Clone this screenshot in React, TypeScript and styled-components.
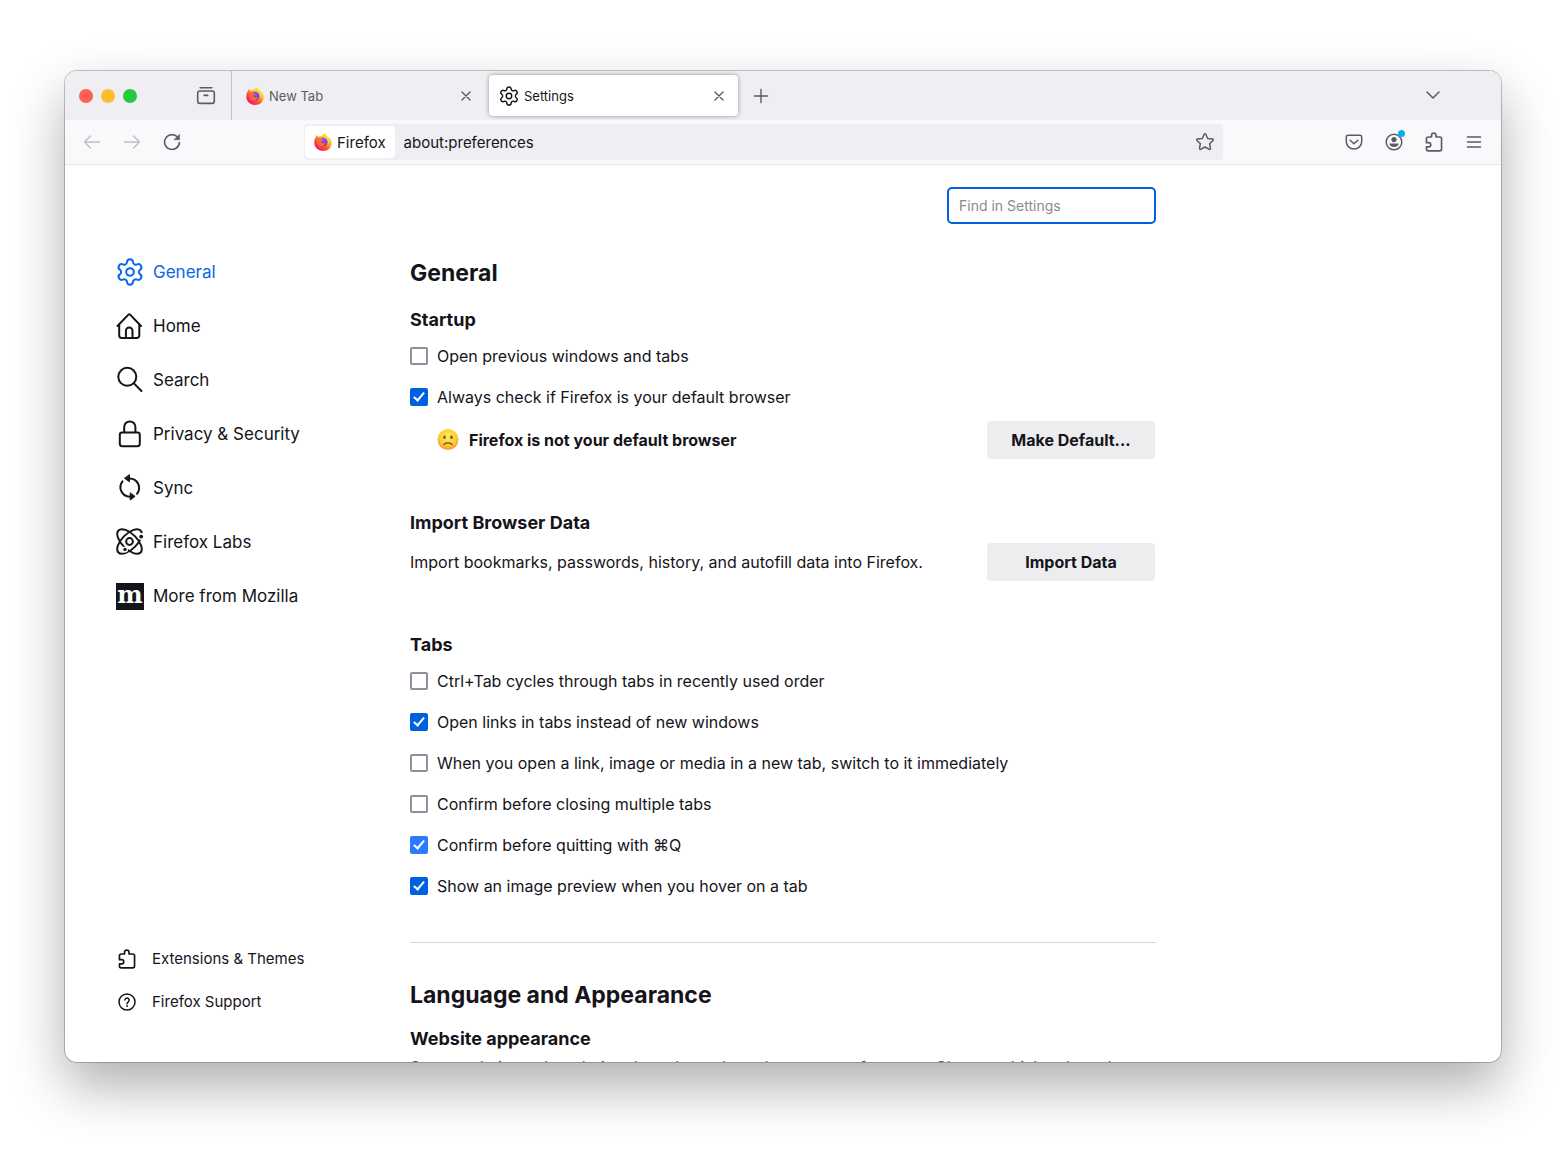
import React, { useState } from 'react';
import styled, { createGlobalStyle, css } from 'styled-components';

const GlobalStyle = createGlobalStyle`
  *, *::before, *::after { box-sizing: border-box; }
  body {
    margin: 0;
    background: #fff;
    color: #15141a;
    font-family: Inter, "Liberation Sans", "DejaVu Sans", sans-serif;
  }
  button, input { font: inherit; color: inherit; }
  h1, h2, h3, p, ul { margin: 0; padding: 0; }
  svg { display: block; flex: none; }
`;

/* ---------- icons ---------- */

type IconProps = { size?: number; stroke?: number };

const Line = ({
  size = 20,
  stroke = 1.5,
  box = 24,
  inset = 0,
  children,
}: IconProps & { box?: number; inset?: number; children: React.ReactNode }) => (
  <svg
    width={size}
    height={size}
    viewBox={`${inset} ${inset} ${box - 2 * inset} ${box - 2 * inset}`}
    fill="none"
    stroke="currentColor"
    strokeWidth={stroke}
    strokeLinecap="round"
    strokeLinejoin="round"
    aria-hidden="true"
  >
    {children}
  </svg>
);

const GearIcon = ({ size, stroke = 1.6 }: IconProps) => (
  <Line size={size} stroke={stroke} inset={1}>
    <path d="M9.671 4.136a2.34 2.34 0 0 1 4.659 0 2.34 2.34 0 0 0 3.319 1.915 2.34 2.34 0 0 1 2.33 4.033 2.34 2.34 0 0 0 0 3.831 2.34 2.34 0 0 1-2.33 4.033 2.34 2.34 0 0 0-3.319 1.915 2.34 2.34 0 0 1-4.659 0 2.34 2.34 0 0 0-3.32-1.915 2.34 2.34 0 0 1-2.33-4.033 2.34 2.34 0 0 0 0-3.831A2.34 2.34 0 0 1 6.35 6.051a2.34 2.34 0 0 0 3.319-1.915" />
    <circle cx="12" cy="12" r="3" />
  </Line>
);

const HomeIcon = () => (
  <Line size={28} box={28} stroke={2}>
    <path d="M1.500 14 12.400 2.600a1.200 1.200 0 0 1 1.700 0L25 14" />
    <path d="M3.200 12.700v10.900a2.400 2.400 0 0 0 2.400 2.400h15.300a2.400 2.400 0 0 0 2.400-2.400V12.700" />
    <path d="M9.900 25.600v-6.800a3.300 3.300 0 0 1 6.600 0v6.800" />
  </Line>
);

const SearchIcon = () => (
  <Line size={28} box={28} stroke={2}>
    <circle cx="11.300" cy="10.800" r="9" />
    <path d="m17.900 17.400 7.600 7.600" />
  </Line>
);

const LockIcon = () => (
  <Line size={28} box={28} stroke={2}>
    <rect x="3.800" y="12.400" width="20" height="13.800" rx="2.400" />
    <path d="M8.200 12.200V7a5.600 5.600 0 0 1 11.200 0v5.200" />
  </Line>
);

const SyncIcon = () => (
  <Line size={28} box={28} stroke={2}>
    <path d="M6.500 7.300a9.500 9.500 0 0 0 7.300 15.400" />
    <path d="M13.600 4.400A9.500 9.500 0 0 1 21 19.800" />
    <path d="M13.400 1v6.800L8.800 4.400z" fill="currentColor" strokeWidth="1" />
    <path d="M14.200 19.200V26l4.600-3.400z" fill="currentColor" strokeWidth="1" />
  </Line>
);

const LabsIcon = () => (
  <Line size={28} box={28} stroke={2}>
    <circle cx="13.500" cy="13.500" r="3.400" />
    <ellipse cx="13.500" cy="13.500" rx="15.600" ry="7.600" transform="rotate(45 13.500 13.500)" />
    <ellipse cx="13.500" cy="13.500" rx="15.600" ry="7.600" transform="rotate(-45 13.500 13.500)" />
    <circle cx="25.400" cy="8.400" r="3.400" fill="#fff" stroke="none" />
    <circle cx="9" cy="21.400" r="3" fill="#fff" stroke="none" />
    <circle cx="25.200" cy="8.600" r="1.900" fill="currentColor" stroke="none" />
    <circle cx="9" cy="21.400" r="1.700" fill="currentColor" stroke="none" />
  </Line>
);

const PuzzleIcon = () => (
  <Line size={20} box={20} stroke={1.5} inset={1}>
    <path d="M3.200 7.200c0-1 .6-1.700 1.600-1.700h3V4a2 2 0 0 1 4 0v1.500h3.400c1 0 1.600.6 1.600 1.600v9.300c0 1-.6 1.600-1.600 1.600H4.800c-1 0-1.600-.6-1.600-1.600v-2h2a1.900 1.900 0 0 0 0-3.800h-2z" />
  </Line>
);

const HelpIcon = () => (
  <Line size={20} box={20} stroke={1.5}>
    <circle cx="10" cy="10" r="8" />
    <path d="M7.900 8.100a2.100 2.100 0 1 1 3.400 1.700c-.8.6-1.300 1-1.300 1.900" />
    <circle cx="10" cy="14" r=".4" fill="currentColor" strokeWidth="1" />
  </Line>
);

const ArchiveIcon = () => (
  <Line size={20} box={20} stroke={1.6}>
    <path d="M4.200 1.800h11.600" />
    <rect x="1.700" y="5" width="16.600" height="12.400" rx="2.200" />
    <path d="M8.200 9.400h3.600" />
  </Line>
);

const CloseIcon = () => (
  <Line size={12} box={12} stroke={1.400}>
    <path d="m2 2 8 8M10 2l-8 8" />
  </Line>
);

const PlusIcon = () => (
  <Line size={16} box={16} stroke={1.400}>
    <path d="M8 1.500v13M1.500 8h13" />
  </Line>
);

const ChevronIcon = () => (
  <Line size={16} box={16} stroke={1.500}>
    <path d="m2 4 6 6 6-6" />
  </Line>
);

const BackIcon = () => (
  <Line size={18} box={18} stroke={1.500}>
    <path d="M16.500 9h-15M7.500 3l-6 6 6 6" />
  </Line>
);

const ForwardIcon = () => (
  <Line size={18} box={18} stroke={1.500}>
    <path d="M1.500 9h15M10.500 3l6 6-6 6" />
  </Line>
);

const ReloadIcon = () => (
  <Line size={18} box={18} stroke={1.600}>
    <path d="M14.600 4.200A7.400 7.400 0 1 0 16.400 9.600" />
    <path d="M16.500 1.500v5.200h-5.200z" fill="currentColor" strokeWidth=".6" />
  </Line>
);

const StarIcon = () => (
  <Line size={20} box={20} stroke={1.500}>
    <path d="M9.200 2.300a.9.9 0 0 1 1.600 0l1.900 4.200 4.800.6c.8.1 1 .9.500 1.400l-3.400 3.200.9 4.700c.1.700-.6 1.200-1.200.9L10 15l-4.300 2.300c-.6.300-1.300-.2-1.200-.9l.9-4.700L2 8.500c-.5-.5-.3-1.300.5-1.400l4.800-.6z" />
  </Line>
);

const PocketIcon = () => (
  <Line size={18} box={18} stroke={1.500}>
    <path d="M3 2.200h12c1 0 1.700.7 1.700 1.700v4.500a7.700 7.700 0 0 1-15.400 0V3.900c0-1 .7-1.700 1.700-1.700z" />
    <path d="M5.200 7.200 9 10.800l3.800-3.600" />
  </Line>
);

const AccountIcon = () => (
  <Line size={18} box={18} stroke={1.500}>
    <circle cx="9" cy="9" r="7.800" />
    <circle cx="9" cy="6.600" r="2.600" fill="currentColor" stroke="none" />
    <path d="M4.400 10.600h9.200c0 2-1.900 3.400-4.600 3.400s-4.600-1.400-4.600-3.400z" fill="currentColor" stroke="none" />
  </Line>
);

const MenuIcon = () => (
  <Line size={16} box={16} stroke={1.500}>
    <path d="M1.500 3h13M1.500 8h13M1.500 13h13" />
  </Line>
);

const FirefoxLogo = ({ id }: { id: string }) => (
  <svg width="18" height="18" viewBox="0 0 36 36" aria-hidden="true">
    <defs>
      <linearGradient id={`${id}-body`} x1="0.850" y1="0.100" x2="0.200" y2="0.950">
        <stop offset="0" stopColor="#fff14a" />
        <stop offset="0.350" stopColor="#ffb82e" />
        <stop offset="0.600" stopColor="#ff5a2c" />
        <stop offset="1" stopColor="#f0107c" />
      </linearGradient>
      <radialGradient id={`${id}-globe`} cx="0.500" cy="0.300" r="0.700">
        <stop offset="0" stopColor="#a34bff" />
        <stop offset="1" stopColor="#5a38c8" />
      </radialGradient>
    </defs>
    <path
      d="M22 0c1 4 4 5.500 6.500 8.500C32 10 35.500 14 35.500 20 35.500 29 28 36 18 36S.5 28.500.5 19.500C.5 14.500 2 10.500 4 7.500L5 4l4 4c2-1.500 4-2 6.500-2C17.500 3 19.500 1 22 0z"
      fill={`url(#${id}-body)`}
    />
    <circle cx="18.500" cy="18" r="8.500" fill={`url(#${id}-globe)`} />
    <path d="M6 13c3-3 6-3 9-1 2 0 3.500.5 3.500 1.500-1 2-3.500 1.500-4.500 4 1 3.500 5.500 4.500 10 2-1 5-6 8-11 7C8.500 26 5 20 6 13z" fill="#ff6a28" />
    <path d="M22 3c6 5 9.500 10 7 17-.5-4-2-7-5-8.500C22 9 20.500 6 22 3z" fill="#ffd83c" />
  </svg>
);

const FrownFace = () => (
  <svg width="22" height="22" viewBox="0 0 22 22" role="img" aria-label="Slightly frowning face">
    <defs>
      <radialGradient id="face" cx="0.500" cy="0.350" r="0.650">
        <stop offset="0" stopColor="#ffea5c" />
        <stop offset="0.650" stopColor="#fccb37" />
        <stop offset="1" stopColor="#f0992a" />
      </radialGradient>
    </defs>
    <circle cx="11" cy="10.500" r="10.500" fill="url(#face)" />
    <ellipse cx="7.500" cy="8.300" rx="1.100" ry="1.700" fill="#6b3d10" />
    <ellipse cx="14.500" cy="8.300" rx="1.100" ry="1.700" fill="#6b3d10" />
    <path d="M7 15.500c1.800-2.200 6.200-2.200 8 0" fill="none" stroke="#6b3d10" strokeWidth="1.200" strokeLinecap="round" />
  </svg>
);

/* ---------- window chrome ---------- */

const Desktop = styled.div`
  display: flex;
  height: 100vh;
  padding: 71px 59px 92px 65px;
`;

const Window = styled.div`
  flex: 1;
  min-width: 0;
  display: flex;
  flex-direction: column;
  overflow: hidden;
  background: #fff;
  border-radius: 12px;
  box-shadow: 0 0 0 1px rgba(0, 0, 0, 0.22), 0 24px 54px rgba(0, 0, 0, 0.32);
`;

const TabStrip = styled.header`
  display: flex;
  align-items: center;
  height: 49px;
  flex: none;
  background: #efeef3;
`;

const WindowControls = styled.div`
  display: flex;
  gap: 8px;
  padding: 0 58px 0 14px;
`;

const ControlDot = styled.button<{ $color: string }>`
  width: 14px;
  height: 14px;
  padding: 0;
  border: 0;
  border-radius: 50%;
  background: ${(p) => p.$color};
`;

const IconButton = styled.button<{ $size?: number; $faded?: boolean }>`
  position: relative;
  display: flex;
  align-items: center;
  justify-content: center;
  flex: none;
  width: ${(p) => p.$size ?? 40}px;
  height: ${(p) => p.$size ?? 40}px;
  padding: 0;
  border: 0;
  background: none;
  color: ${(p) => (p.$faded ? '#bfbfc4' : '#5b5b66')};
`;

const StripDivider = styled.div`
  align-self: stretch;
  width: 1px;
  margin-left: 14px;
  background: #c2c2c7;
`;

const Tab = styled.div<{ $active?: boolean }>`
  display: flex;
  align-items: center;
  width: 249px;
  height: 41px;
  margin-left: 4px;
  padding: 0 9px 0 10px;
  border-radius: 4px;
  font-size: 13px;
  color: #5b5b66;
  ${(p) =>
    p.$active &&
    css`
      color: #15141a;
      background: #fff;
      box-shadow: 0 0 4px rgba(0, 0, 0, 0.4);
    `}
`;

const TabTitle = styled.button`
  flex: 1;
  min-width: 0;
  display: flex;
  align-items: center;
  gap: 5px;
  padding: 0;
  border: 0;
  background: none;
  text-align: left;
`;

const TabList = styled.div`
  flex: 1;
  min-width: 0;
  display: flex;
  align-items: center;
`;

const StripEnd = styled.div`
  padding-right: 48px;
`;

const NavBar = styled.div`
  display: flex;
  align-items: center;
  flex: none;
  height: 45px;
  padding: 0 7px;
  background: #f9f9fb;
  border-bottom: 1px solid #e6e6ea;
`;

const UrlBar = styled.div`
  flex: 1;
  min-width: 0;
  display: flex;
  align-items: center;
  height: 36px;
  margin: 0 111px 0 112px;
  padding: 2px 0 2px 1px;
  border-radius: 4px;
  background: #efeef3;
  font-size: 15px;
`;

const Identity = styled.button`
  display: flex;
  align-items: center;
  gap: 5px;
  height: 32px;
  padding: 0 9px;
  border: 0;
  border-radius: 4px;
  background: #fff;
`;

const UrlInput = styled.input`
  flex: 1;
  min-width: 0;
  padding: 0 9px;
  border: 0;
  outline: 0;
  background: none;
`;

const Badge = styled.span`
  position: absolute;
  top: 8px;
  right: 9px;
  width: 7px;
  height: 7px;
  border-radius: 50%;
  background: #00b3f4;
`;

/* ---------- preferences page ---------- */

const Page = styled.div`
  flex: 1;
  min-height: 0;
  display: flex;
  overflow: hidden;
`;

const Sidebar = styled.nav`
  width: 345px;
  flex: none;
  display: flex;
  flex-direction: column;
  justify-content: space-between;
  padding: 80px 20px 39px 51px;
`;

const LinkList = styled.ul`
  list-style: none;
`;

const Category = styled.a<{ $selected?: boolean }>`
  display: flex;
  align-items: center;
  gap: 9px;
  height: 54px;
  font-size: 17px;
  text-decoration: none;
  color: ${(p) => (p.$selected ? '#0a67e8' : '#15141a')};
`;

const FooterLink = styled.a`
  display: flex;
  align-items: center;
  gap: 15px;
  height: 43px;
  padding-left: 1px;
  font-size: 15px;
  text-decoration: none;
  color: #15141a;
`;

const MozillaMark = styled.span`
  display: flex;
  align-items: center;
  justify-content: center;
  width: 28px;
  height: 27px;
  padding-bottom: 3px;
  background: #15141a;
  color: #fff;
  font: bold 24px/24px "DejaVu Serif", serif;
`;

const Main = styled.main`
  flex: 1;
  min-width: 0;
  max-width: 746px;
  display: flex;
  flex-direction: column;
`;

const SearchRow = styled.div`
  display: flex;
  justify-content: flex-end;
  padding: 22px 0 32px;
`;

const SearchInput = styled.input`
  width: 209px;
  height: 37px;
  margin-bottom: 1px;
  padding: 0 10px;
  border: 2px solid #0061e0;
  border-radius: 5px;
  outline: 0;
  background: #fff;
  font-size: 14px;
  &::placeholder { color: #8a8a8f; opacity: 1; }
`;

const Title = styled.h1`
  font-size: 23px;
  line-height: 32px;
  font-weight: 700;
`;

const Group = styled.section<{ $top?: number }>`
  display: flex;
  flex-direction: column;
  padding-top: ${(p) => p.$top ?? 51}px;
`;

const GroupTitle = styled.h2`
  font-size: 18px;
  line-height: 26px;
  font-weight: 700;
`;

const Options = styled.div`
  display: flex;
  flex-direction: column;
  gap: 17px;
  padding: 11px 0 12px;
`;

const OptionLabel = styled.label`
  display: flex;
  align-items: center;
  gap: 9px;
  font-size: 16px;
  line-height: 24px;
`;

const Tick = styled.input<{ $bright?: boolean }>`
  appearance: none;
  display: flex;
  justify-content: center;
  flex: none;
  width: 18px;
  height: 18px;
  margin: 0;
  border: 2px solid #8f8f9d;
  border-radius: 2px;
  background: #fff;
  &:checked {
    border-color: ${(p) => (p.$bright ? '#2a7bff' : '#0061e0')};
    background: ${(p) => (p.$bright ? '#2a7bff' : '#0061e0')};
  }
  &:checked::after {
    content: '';
    width: 6px;
    height: 11px;
    border: solid #fff;
    border-width: 0 2px 2px 0;
    transform: rotate(40deg);
  }
`;

const ActionRow = styled.div<{ $indent?: boolean }>`
  display: flex;
  align-items: center;
  gap: 10px;
  padding-left: ${(p) => (p.$indent ? 27 : 0)}px;
  font-size: 16px;
  font-weight: ${(p) => (p.$indent ? 700 : 400)};
`;

const ActionText = styled.p`
  flex: 1;
  line-height: 24px;
`;

const ActionButton = styled.button`
  width: 168px;
  height: 38px;
  margin-right: 1px;
  border: 0;
  border-radius: 4px;
  background: #ededf0;
  font-weight: 700;
`;

const ImportBody = styled.div`
  padding-top: 7px;
`;

const Rule = styled.hr`
  width: 100%;
  margin: 32px 0 36px;
  border: 0;
  border-top: 1px solid #d7d7db;
`;

const Description = styled.p`
  padding-top: 3px;
  font-size: 16px;
  line-height: 24px;
  color: #5b5b66;
`;

type OptionProps = { text: React.ReactNode; on?: boolean; bright?: boolean };

const Option = ({ text, on = false, bright }: OptionProps) => {
  const [checked, setChecked] = useState(on);
  return (
    <OptionLabel>
      <Tick type="checkbox" checked={checked} $bright={bright} onChange={() => setChecked(!checked)} />
      <span>{text}</span>
    </OptionLabel>
  );
};

const categories = [
  { label: 'General', icon: <GearIcon size={28} /> },
  { label: 'Home', icon: <HomeIcon /> },
  { label: 'Search', icon: <SearchIcon /> },
  { label: 'Privacy & Security', icon: <LockIcon /> },
  { label: 'Sync', icon: <SyncIcon /> },
  { label: 'Firefox Labs', icon: <LabsIcon /> },
  { label: 'More from Mozilla', icon: <MozillaMark aria-hidden="true">m</MozillaMark> },
];

const tabOptions: OptionProps[] = [
  { text: 'Ctrl+Tab cycles through tabs in recently used order' },
  { text: 'Open links in tabs instead of new windows', on: true },
  { text: 'When you open a link, image or media in a new tab, switch to it immediately' },
  { text: 'Confirm before closing multiple tabs' },
  { text: 'Confirm before quitting with ⌘Q', on: true, bright: true },
  { text: 'Show an image preview when you hover on a tab', on: true },
];

export default function App() {
  return (
    <>
      <GlobalStyle />
      <Desktop>
        <Window>
          <TabStrip>
            <WindowControls>
              <ControlDot $color="#ff5f57" aria-label="Close window" />
              <ControlDot $color="#febc2e" aria-label="Minimize window" />
              <ControlDot $color="#28c840" aria-label="Zoom window" />
            </WindowControls>
            <IconButton $size={22} aria-label="View recent browsing"><ArchiveIcon /></IconButton>
            <StripDivider />
            <TabList>
              <Tab>
                <TabTitle><FirefoxLogo id="tab" />New Tab</TabTitle>
                <IconButton $size={20} aria-label="Close tab"><CloseIcon /></IconButton>
              </Tab>
              <Tab $active>
                <TabTitle><GearIcon size={20} />Settings</TabTitle>
                <IconButton $size={20} aria-label="Close tab"><CloseIcon /></IconButton>
              </Tab>
              <IconButton $size={46} aria-label="New tab"><PlusIcon /></IconButton>
            </TabList>
            <StripEnd>
              <IconButton aria-label="List all tabs"><ChevronIcon /></IconButton>
            </StripEnd>
          </TabStrip>

          <NavBar>
            <IconButton $faded aria-label="Back"><BackIcon /></IconButton>
            <IconButton $faded aria-label="Forward"><ForwardIcon /></IconButton>
            <IconButton aria-label="Reload"><ReloadIcon /></IconButton>
            <UrlBar>
              <Identity><FirefoxLogo id="identity" />Firefox</Identity>
              <UrlInput aria-label="Address" defaultValue="about:preferences" />
              <IconButton $size={36} aria-label="Bookmark this page"><StarIcon /></IconButton>
            </UrlBar>
            <IconButton aria-label="Save to Pocket"><PocketIcon /></IconButton>
            <IconButton aria-label="Account"><AccountIcon /><Badge /></IconButton>
            <IconButton aria-label="Extensions"><PuzzleIcon /></IconButton>
            <IconButton aria-label="Open application menu"><MenuIcon /></IconButton>
          </NavBar>

          <Page>
            <Sidebar aria-label="Settings categories">
              <LinkList>
                {categories.map((c, i) => (
                  <li key={c.label}>
                    <Category href="#" $selected={i === 0}>{c.icon}{c.label}</Category>
                  </li>
                ))}
              </LinkList>
              <LinkList>
                <li><FooterLink href="#"><PuzzleIcon />Extensions &amp; Themes</FooterLink></li>
                <li><FooterLink href="#"><HelpIcon />Firefox Support</FooterLink></li>
              </LinkList>
            </Sidebar>

            <Main>
              <SearchRow>
                <SearchInput type="text" placeholder="Find in Settings" aria-label="Find in Settings" />
              </SearchRow>

              <Title>General</Title>

              <Group $top={18}>
                <GroupTitle>Startup</GroupTitle>
                <Options>
                  <Option text="Open previous windows and tabs" />
                  <Option text="Always check if Firefox is your default browser" on />
                </Options>
                <ActionRow $indent>
                  <FrownFace />
                  <ActionText>Firefox is not your default browser</ActionText>
                  <ActionButton>Make Default...</ActionButton>
                </ActionRow>
              </Group>

              <Group>
                <GroupTitle>Import Browser Data</GroupTitle>
                <ImportBody>
                  <ActionRow>
                    <ActionText>Import bookmarks, passwords, history, and autofill data into Firefox.</ActionText>
                    <ActionButton>Import Data</ActionButton>
                  </ActionRow>
                </ImportBody>
              </Group>

              <Group>
                <GroupTitle>Tabs</GroupTitle>
                <Options>
                  {tabOptions.map((o, i) => <Option key={i} {...o} />)}
                </Options>
              </Group>

              <Rule />

              <Title as="h2">Language and Appearance</Title>
              <Group $top={15}>
                <GroupTitle as="h3">Website appearance</GroupTitle>
                <Description>
                  Some websites adapt their color scheme based on your preferences. Choose which color
                  scheme you’d like to use for those sites.
                </Description>
              </Group>
            </Main>
          </Page>
        </Window>
      </Desktop>
    </>
  );
}
